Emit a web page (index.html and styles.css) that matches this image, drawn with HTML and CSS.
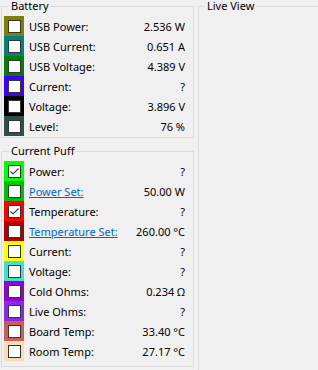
FILE: index.html
```html
<!DOCTYPE html>
<html lang="en">
  <head>
    <meta charset="UTF-8" />
    <meta name="viewport" content="width=device-width, initial-scale=1.0" />
    <title>Monitor</title>
    <link rel="stylesheet" href="styles.css">
  </head>
  <body>
    <div class="left-col">
      <fieldset class="group">
        <legend>Battery</legend>
        <div class="row">
          <span class="swatch" style="background: #808000"><span class="box"></span></span>
          <span class="label">USB Power:</span>
          <span class="value">2.536 W</span>
        </div>
        <div class="row">
          <span class="swatch" style="background: #008080"><span class="box"></span></span>
          <span class="label">USB Current:</span>
          <span class="value">0.651 A</span>
        </div>
        <div class="row">
          <span class="swatch" style="background: #008000"><span class="box"></span></span>
          <span class="label">USB Voltage:</span>
          <span class="value">4.389 V</span>
        </div>
        <div class="row">
          <span class="swatch" style="background: #4000ff"><span class="box"></span></span>
          <span class="label">Current:</span>
          <span class="value">?</span>
        </div>
        <div class="row">
          <span class="swatch" style="background: #000000"><span class="box"></span></span>
          <span class="label">Voltage:</span>
          <span class="value">3.896 V</span>
        </div>
        <div class="row">
          <span class="swatch" style="background: #2f4f4f"><span class="box"></span></span>
          <span class="label">Level:</span>
          <span class="value">76 %</span>
        </div>
      </fieldset>

      <fieldset class="group puff">
        <legend>Current Puff</legend>
        <div class="row">
          <span class="swatch" style="background: #00ff00">
            <span class="box">
              <svg viewBox="0 0 11 11" width="11" height="11"><polyline points="1.5,5.5 4,8 9.5,2.5" /></svg>
            </span>
          </span>
          <span class="label">Power:</span>
          <span class="value">?</span>
        </div>
        <div class="row">
          <span class="swatch" style="background: #00c000"><span class="box"></span></span>
          <a class="label link" href="#">Power Set:</a>
          <span class="value">50.00 W</span>
        </div>
        <div class="row">
          <span class="swatch" style="background: #ff0000">
            <span class="box">
              <svg viewBox="0 0 11 11" width="11" height="11"><polyline points="1.5,5.5 4,8 9.5,2.5" /></svg>
            </span>
          </span>
          <span class="label">Temperature:</span>
          <span class="value">?</span>
        </div>
        <div class="row">
          <span class="swatch" style="background: #b00000"><span class="box"></span></span>
          <a class="label link" href="#">Temperature Set:</a>
          <span class="value">260.00 °C</span>
        </div>
        <div class="row">
          <span class="swatch" style="background: #ffff00"><span class="box"></span></span>
          <span class="label">Current:</span>
          <span class="value">?</span>
        </div>
        <div class="row">
          <span class="swatch" style="background: #40e0d0"><span class="box"></span></span>
          <span class="label">Voltage:</span>
          <span class="value">?</span>
        </div>
        <div class="row">
          <span class="swatch" style="background: #9400d3"><span class="box"></span></span>
          <span class="label">Cold Ohms:</span>
          <span class="value">0.234 Ω</span>
        </div>
        <div class="row">
          <span class="swatch" style="background: #8a2be2"><span class="box"></span></span>
          <span class="label">Live Ohms:</span>
          <span class="value">?</span>
        </div>
        <div class="row">
          <span class="swatch" style="background: #cd5c5c"><span class="box"></span></span>
          <span class="label">Board Temp:</span>
          <span class="value">33.40 °C</span>
        </div>
        <div class="row">
          <span class="swatch" style="background: #f5deb3"><span class="box"></span></span>
          <span class="label">Room Temp:</span>
          <span class="value">27.17 °C</span>
        </div>
      </fieldset>
    </div>

    <fieldset class="group live">
      <legend>Live View</legend>
    </fieldset>
  </body>
</html>
```

FILE: styles.css
```css
* {
  box-sizing: border-box;
}

html,
body {
  margin: 0;
  padding: 0;
  height: 100%;
}

body {
  background: #f0f0f0;
  color: #000000;
  font-family: "Noto Sans", "DejaVu Sans", sans-serif;
  font-size: 11px;
  display: flex;
  gap: 4px;
  overflow: hidden;
}

.left-col {
  width: 193px;
  margin-left: 1px;
  display: flex;
  flex-direction: column;
  gap: 7px;
  flex-shrink: 0;
}

.group {
  margin: 0;
  min-width: 0;
  border: 1px solid #dcdcdc;
  padding: 1px 8px 1px 2px;
}

.group legend {
  margin-left: 5px;
  padding: 0 2px;
  line-height: 12px;
  height: 12px;
}

.puff {
  padding-bottom: 5px;
}

.live {
  width: 200px;
  flex-shrink: 0;
  height: 420px;
}

.live legend {
  margin-left: 4px;
}

.row {
  display: grid;
  grid-template-columns: 20px 1fr auto;
  column-gap: 5px;
  align-items: center;
  height: 20px;
}

.row:first-of-type {
  margin-top: 3px;
}

.swatch {
  width: 20px;
  height: 20px;
  display: flex;
  align-items: center;
  justify-content: center;
}

.box {
  width: 13px;
  height: 13px;
  background: #ffffff;
  border: 1px solid #333333;
  display: flex;
  align-items: center;
  justify-content: center;
}

.box svg {
  fill: none;
  stroke: #444444;
  stroke-width: 1.2;
}

.label {
  white-space: nowrap;
}

.link {
  color: #0066cc;
  text-decoration: underline;
}

.value {
  text-align: right;
  white-space: nowrap;
}
```
